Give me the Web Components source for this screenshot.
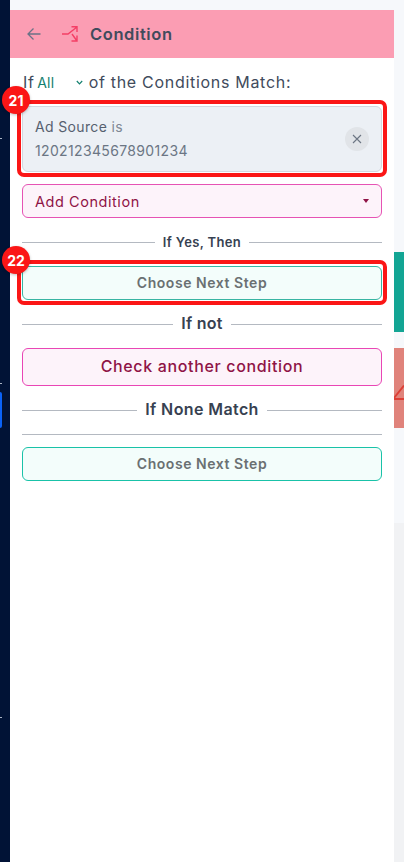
<!DOCTYPE html>
<html>
<head>
<meta charset="utf-8">
<title>Condition</title>
<style>
  html, body { margin: 0; height: 100%; overflow: hidden; }
  body { font-family: "Inter", "Liberation Sans", sans-serif; color: #374151; }
</style>
</head>
<body>
<flow-page>
  <condition-panel>
    <panel-header slot="header" title-text="Condition"></panel-header>
    <match-line></match-line>
    <note-box number="21">
      <condition-card field="Ad Source" op="is" value="120212345678901234"></condition-card>
    </note-box>
    <add-select label="Add Condition"></add-select>
    <section-rule label="If Yes, Then" size="13" spacing=".35" top="14" bottom="8"></section-rule>
    <note-box number="22">
      <step-button label="Choose Next Step"></step-button>
    </note-box>
    <section-rule label="If not" size="16" spacing=".25" top="9" bottom="14" lift="2"></section-rule>
    <other-button label="Check another condition"></other-button>
    <section-rule label="If None Match" size="16" spacing=".4" top="14" bottom="14" lift="2"></section-rule>
    <plain-rule></plain-rule>
    <step-button label="Choose Next Step" bright></step-button>
  </condition-panel>
</flow-page>

<script>
class FlowPage extends HTMLElement {
    constructor() {
        super();
        this.attachShadow({ mode: 'open' });
        this.shadowRoot.innerHTML = `
          <style>
            :host { display: flex; width: 404px; height: 862px; background: #f6f8fb; position: relative; overflow: hidden; }
            .nav { width: 10px; flex: none; background: #011336; position: relative; }
            .tick { position: absolute; left: 0; width: 2px; height: 1px; background: #aab4c4; }
            .active { position: absolute; left: 0; top: 392px; width: 2px; height: 36px; background: #0b63f6; border-radius: 0 2px 2px 0; }
            .main { width: 384px; flex: none; padding-top: 10px; box-sizing: border-box; }
            .side { flex: 1; display: flex; flex-direction: column; padding-top: 252px; }
            .teal { height: 80px; background: #13a594; }
            .salmon { height: 80px; margin-top: 16px; background: #e0837b; position: relative; overflow: hidden; }
            .salmon svg { position: absolute; left: 0; top: 30px; }
            .low { flex: 1; margin-top: 95px; background: #f1f2f4; }
          </style>
          <div class="nav">
            <div class="tick" style="top:138px"></div>
            <div class="tick" style="top:383px"></div>
            <div class="tick" style="top:717px"></div>
            <div class="active"></div>
          </div>
          <div class="main"><slot></slot></div>
          <div class="side">
            <div class="teal"></div>
            <div class="salmon">
              <svg width="10" height="24" viewBox="0 0 10 24" fill="none" stroke="#dc3f36" stroke-width="2"><path d="M0 21H10M0 20L10 7.5"/></svg>
            </div>
            <div class="low"></div>
          </div>
        `;
    }
}

class ConditionPanel extends HTMLElement {
    constructor() {
        super();
        this.attachShadow({ mode: 'open' });
        this.shadowRoot.innerHTML = `
          <style>
            :host { display: block; height: 852px; background: #fff; }
            .body { display: flex; flex-direction: column; padding: 0 12px; }
          </style>
          <slot name="header"></slot>
          <div class="body"><slot></slot></div>
        `;
    }
}

class PanelHeader extends HTMLElement {
    constructor() {
        super();
        this.attachShadow({ mode: 'open' });
        this.shadowRoot.innerHTML = `
          <style>
            :host { display: flex; align-items: center; height: 48px; background: #fb9db3; }
            .back { margin-left: 17px; width: 14px; height: 14px; }
            .split { margin-left: 21px; width: 16px; height: 16px; }
            span { margin-left: 12px; font-size: 16.5px; font-weight: 600; letter-spacing: .6px; color: #414b5c; }
          </style>
          <svg class="back" viewBox="0 0 14 14" fill="none" stroke="#6b7286" stroke-width="1.3"><path d="M13.5 7H1M6.5 1.5L1 7l5.5 5.5"/></svg>
          <svg class="split" viewBox="0 0 16 16" fill="none" stroke="#f43f66" stroke-width="1.4"><path d="M0 8H6L15 1M9.5 .7H15V6M10 8L15 15M9.5 15H15V9.5"/></svg>
          <span>${this.getAttribute('title-text')}</span>
        `;
    }
}

class MatchLine extends HTMLElement {
    constructor() {
        super();
        this.attachShadow({ mode: 'open' });
        this.shadowRoot.innerHTML = `
          <style>
            :host { display: flex; align-items: center; height: 42px; box-sizing: border-box; padding: 6px 0 0 1px; font-size: 16px; letter-spacing: .7px; color: #414b5c; }
            .all { margin-left: 2.5px; width: 38.5px; font-size: 14px; letter-spacing: .3px; color: #13806f; }
            svg { width: 7px; height: 5px; margin-right: 6px; }
          </style>
          <span>If</span>
          <span class="all">All</span>
          <svg viewBox="0 0 7 5" fill="none" stroke="#13806f" stroke-width="1.2"><path d="M.8 1L3.5 3.8 6.2 1"/></svg>
          <span>of the Conditions Match:</span>
        `;
    }
}

class NoteBox extends HTMLElement {
    constructor() {
        super();
        this.attachShadow({ mode: 'open' });
        this.shadowRoot.innerHTML = `
          <style>
            :host { display: block; position: relative; margin: 0 -5px; padding: 2px 1px 1px; border: 4px solid #fb1616; border-radius: 7px; background: #fff; }
            .badge {
              position: absolute; left: -19px; top: -18px; width: 28px; height: 28px; border-radius: 50%;
              background: #fb1616; color: #fff; font-size: 14px; font-weight: 700;
              display: flex; align-items: center; justify-content: center;
              box-shadow: 0 1px 3px rgba(0,0,0,.25);
            }
          </style>
          <div class="badge">${this.getAttribute('number')}</div>
          <slot></slot>
        `;
    }
}

class ConditionCard extends HTMLElement {
    constructor() {
        super();
        this.attachShadow({ mode: 'open' });
        this.shadowRoot.innerHTML = `
          <style>
            :host { display: flex; justify-content: space-between; align-items: center; height: 66px; box-sizing: border-box; padding: 0 12px; background: #ecf0f5; border: 1px solid #d3d8df; border-radius: 6px; }
            .txt { font-size: 14px; line-height: 24px; letter-spacing: .35px; color: #6b7684; }
            .field { color: #56606f; }
            .op { color: #7e8794; }
            .close { width: 24px; height: 24px; border-radius: 50%; background: #e1e4e8; display: flex; align-items: center; justify-content: center; }
            svg { width: 10px; height: 10px; }
          </style>
          <div class="txt">
            <div><span class="field">${this.getAttribute('field')}</span> <span class="op">${this.getAttribute('op')}</span></div>
            <div>${this.getAttribute('value')}</div>
          </div>
          <div class="close"><svg viewBox="0 0 10 10" fill="none" stroke="#6c7583" stroke-width="1.1"><path d="M1 1L9 9M9 1L1 9"/></svg></div>
        `;
    }
}

class AddSelect extends HTMLElement {
    constructor() {
        super();
        this.attachShadow({ mode: 'open' });
        this.shadowRoot.innerHTML = `
          <style>
            :host { display: flex; align-items: center; justify-content: space-between; height: 34px; margin-top: 7px; box-sizing: border-box; padding: 0 12px; background: #fdf3fa; border: 1px solid #e653b4; border-radius: 6px; color: #8f1346; font-size: 14.5px; letter-spacing: .55px; }
            i { width: 0; height: 0; border: 3.5px solid transparent; border-top: 4px solid #8f1346; border-bottom: 0; }
          </style>
          <span>${this.getAttribute('label')}</span><i></i>
        `;
    }
}

class SectionRule extends HTMLElement {
    constructor() {
        super();
        this.attachShadow({ mode: 'open' });
        const lift = this.getAttribute('lift') || 0;
        this.shadowRoot.innerHTML = `
          <style>
            :host { display: flex; align-items: center; gap: 8px; margin-top: ${this.getAttribute('top')}px; margin-bottom: ${this.getAttribute('bottom')}px; font-size: ${this.getAttribute('size')}px; letter-spacing: ${this.getAttribute('spacing')}px; font-weight: 600; color: #374151; line-height: 20px; }
            i { flex: 1; height: 1px; background: #b4b9c1; }
            span { margin-top: -${lift}px; margin-bottom: 0; }
            :host { height: 20px; }
          </style>
          <i></i><span>${this.getAttribute('label')}</span><i></i>
        `;
    }
}

class PlainRule extends HTMLElement {
    constructor() {
        super();
        this.attachShadow({ mode: 'open' });
        this.shadowRoot.innerHTML = `
          <style>:host { display: block; height: 1px; background: #b4b9c1; margin-bottom: 12px; }</style>
        `;
    }
}

class StepButton extends HTMLElement {
    constructor() {
        super();
        this.attachShadow({ mode: 'open' });
        const border = this.hasAttribute('bright') ? '#19c2a8' : '#38b5a3';
        this.shadowRoot.innerHTML = `
          <style>
            :host { display: flex; align-items: center; justify-content: center; height: 34px; box-sizing: border-box; padding-bottom: 2px; background: #f3fdfb; border: 1px solid ${border}; border-radius: 6px; font-size: 14px; letter-spacing: .55px; font-weight: 600; color: #6a7072; }
          </style>
          <span>${this.getAttribute('label')}</span>
        `;
    }
}

class OtherButton extends HTMLElement {
    constructor() {
        super();
        this.attachShadow({ mode: 'open' });
        this.shadowRoot.innerHTML = `
          <style>
            :host { display: flex; align-items: center; justify-content: center; height: 38px; box-sizing: border-box; padding-bottom: 2px; background: #fdf3fa; border: 1px solid #e946b5; border-radius: 6px; font-size: 16px; letter-spacing: .65px; font-weight: 500; color: #8f1346; }
          </style>
          <span>${this.getAttribute('label')}</span>
        `;
    }
}

customElements.define('flow-page', FlowPage);
customElements.define('condition-panel', ConditionPanel);
customElements.define('panel-header', PanelHeader);
customElements.define('match-line', MatchLine);
customElements.define('note-box', NoteBox);
customElements.define('condition-card', ConditionCard);
customElements.define('add-select', AddSelect);
customElements.define('section-rule', SectionRule);
customElements.define('plain-rule', PlainRule);
customElements.define('step-button', StepButton);
customElements.define('other-button', OtherButton);
</script>
</body>
</html>
